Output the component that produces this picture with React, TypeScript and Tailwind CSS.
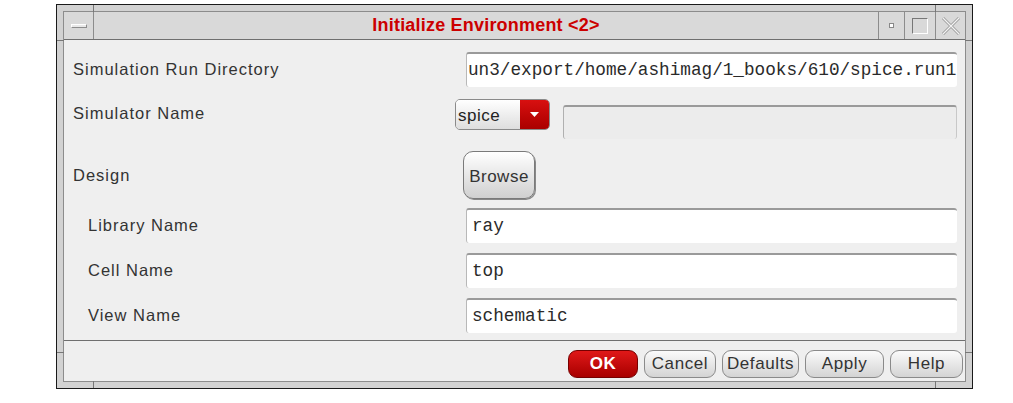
import React from "react";

const sans = { fontFamily: '"Liberation Sans", Arial, sans-serif' };
const mono = { fontFamily: '"Liberation Mono", "Courier New", monospace' };

function Field({ value, pl = "pl-[5px]" }: { value: string; pl?: string }) {
  return (
    <div
      className={`h-[35px] w-[491px] bg-white rounded-[3px] border-t-2 border-l border-t-[#9a9a9a] border-l-[#b8b8b8] flex items-center ${pl} overflow-hidden whitespace-nowrap text-[17.7px] text-[#2a2a2a]`}
      style={mono}
    >
      {value}
    </div>
  );
}

function Btn({ label, w, primary }: { label: string; w: string; primary?: boolean }) {
  return (
    <div
      className={
        primary
          ? `h-[28px] ${w} rounded-[9px] bg-gradient-to-b from-[#e01818] to-[#a80000] border border-[#700] flex items-center justify-center text-white font-bold text-[17px] tracking-[0.5px]`
          : `h-[28px] ${w} rounded-[9px] bg-gradient-to-b from-[#fbfbfb] to-[#d4d4d4] border border-[#8a8a8a] flex items-center justify-center text-[#333] text-[17px] tracking-[0.6px]`
      }
    >
      {label}
    </div>
  );
}

function Label({ text, indent }: { text: string; indent?: boolean }) {
  return (
    <div className={`w-[402px] text-[16.5px] tracking-[1px] text-[#333] ${indent ? "pl-[24px]" : "pl-[9px]"}`}>{text}</div>
  );
}

export default function App() {
  return (
    <div className="w-[1013px] h-[403px] bg-white pt-[4px] pl-[56px]" style={sans}>
      <div className="relative w-[917px] h-[385px] border border-[#1a1a1a] bg-[#d2d2d2] p-[6px] flex">
        {/* frame ticks */}
        <div className="absolute left-[36px] top-0 w-px h-[7px] bg-[#777]" />
        <div className="absolute right-[36px] top-0 w-px h-[7px] bg-[#777]" />
        <div className="absolute left-[36px] bottom-0 w-px h-[7px] bg-[#777]" />
        <div className="absolute right-[36px] bottom-0 w-px h-[7px] bg-[#777]" />
        <div className="absolute left-0 top-[35px] w-[7px] h-px bg-[#777]" />
        <div className="absolute left-0 bottom-[35px] w-[7px] h-px bg-[#777]" />
        <div className="absolute right-0 top-[35px] w-[7px] h-px bg-[#777]" />
        <div className="absolute right-0 bottom-[35px] w-[7px] h-px bg-[#777]" />

        <div className="flex-1 flex flex-col border border-[#8c8c8c] bg-[#efefef]">
          {/* title bar */}
          <div className="h-[28px] flex bg-[#d9d9d9] border-b border-[#6f6f6f]">
            <div className="w-[30px] border-r border-[#8c8c8c] flex items-center justify-center">
              <div className="w-[16px] h-[4px] bg-[#e8e8e8] border border-[#8c8c8c] border-t-white border-l-white" />
            </div>
            <div className="flex-1 flex items-center justify-center text-[18px] font-bold tracking-[0.2px] text-[#cc0000]">
              Initialize Environment &lt;2&gt;
            </div>
            <div className="w-[26px] border-l border-[#8c8c8c] flex items-center justify-center">
              <div className="w-[5px] h-[5px] border border-[#888] bg-white" />
            </div>
            <div className="w-[31px] border-l border-[#8c8c8c] flex items-center justify-center">
              <div className="w-[16px] h-[16px] border border-[#777] border-r-white border-b-white" />
            </div>
            <div className="w-[30px] border-l border-[#8c8c8c] flex items-center justify-center">
              <svg width="20" height="20" viewBox="0 0 20 20">
                <path d="M2 2 L18 18 M18 2 L2 18" stroke="#9a9a9a" strokeWidth="3" fill="none" />
                <path d="M2 2 L18 18 M18 2 L2 18" stroke="#f4f4f4" strokeWidth="1.2" fill="none" />
              </svg>
            </div>
          </div>

          {/* content */}
          <div className="flex-1 flex flex-col">
            <div className="flex items-center h-[35px] mt-[12px]">
              <Label text="Simulation Run Directory" />
              <Field value="un3/export/home/ashimag/1_books/610/spice.run1" pl="pl-[1px]" />
            </div>
            <div className="flex h-[40px] mt-[12px]">
              <div className="w-[402px] pl-[9px] text-[16.5px] tracking-[1px] text-[#333] pt-[2px]">Simulator Name</div>
              <div className="flex items-start">
                <div className="ml-[-11px] h-[31px] w-[95px] flex rounded-[5px] border border-[#8a8a8a] overflow-hidden">
                  <div className="flex-1 bg-gradient-to-b from-[#ffffff] to-[#dedede] flex items-center pl-[2px] pt-[3px] text-[17px] tracking-[0.5px] text-[#222]">spice</div>
                  <div className="w-[29px] bg-gradient-to-b from-[#d81010] to-[#aa0000] flex items-center justify-center">
                    <svg width="9" height="6" viewBox="0 0 9 6"><path d="M0 0 H9 L4.5 5 Z" fill="#fff" /></svg>
                  </div>
                </div>
                <div className="ml-[13px] mt-[6px] h-[34px] w-[394px] rounded-[3px] border-t-2 border-l border-r border-t-[#9a9a9a] border-l-[#b0b0b0] border-r-[#c8c8c8] bg-[#ececec]" />
              </div>
            </div>
            <div className="flex items-center h-[48px] mt-[12px]">
              <Label text="Design" />
              <div className="ml-[-3px] h-[48px] w-[72px] rounded-[10px] border border-[#7a7a7a] bg-gradient-to-b from-[#ffffff] to-[#d0d0d0] flex items-center justify-center pt-[4px] text-[17px] tracking-[0.5px] text-[#333] shadow-[1px_1px_0_#888]">
                Browse
              </div>
            </div>
            <div className="flex items-center h-[35px] mt-[9px]">
              <Label text="Library Name" indent />
              <Field value="ray" />
            </div>
            <div className="flex items-center h-[35px] mt-[10px]">
              <Label text="Cell Name" indent />
              <Field value="top" />
            </div>
            <div className="flex items-center h-[35px] mt-[10px]">
              <Label text="View Name" indent />
              <Field value="schematic" />
            </div>
            <div className="mt-[7px] border-t border-[#6f6f6f]" />
            <div className="flex-1 flex items-center justify-end gap-[6px] pr-[2px] pt-[6px]">
              <Btn label="OK" w="w-[70px]" primary />
              <Btn label="Cancel" w="w-[72px]" />
              <Btn label="Defaults" w="w-[77px]" />
              <Btn label="Apply" w="w-[79px]" />
              <Btn label="Help" w="w-[73px]" />
            </div>
          </div>
        </div>
      </div>
    </div>
  );
}
